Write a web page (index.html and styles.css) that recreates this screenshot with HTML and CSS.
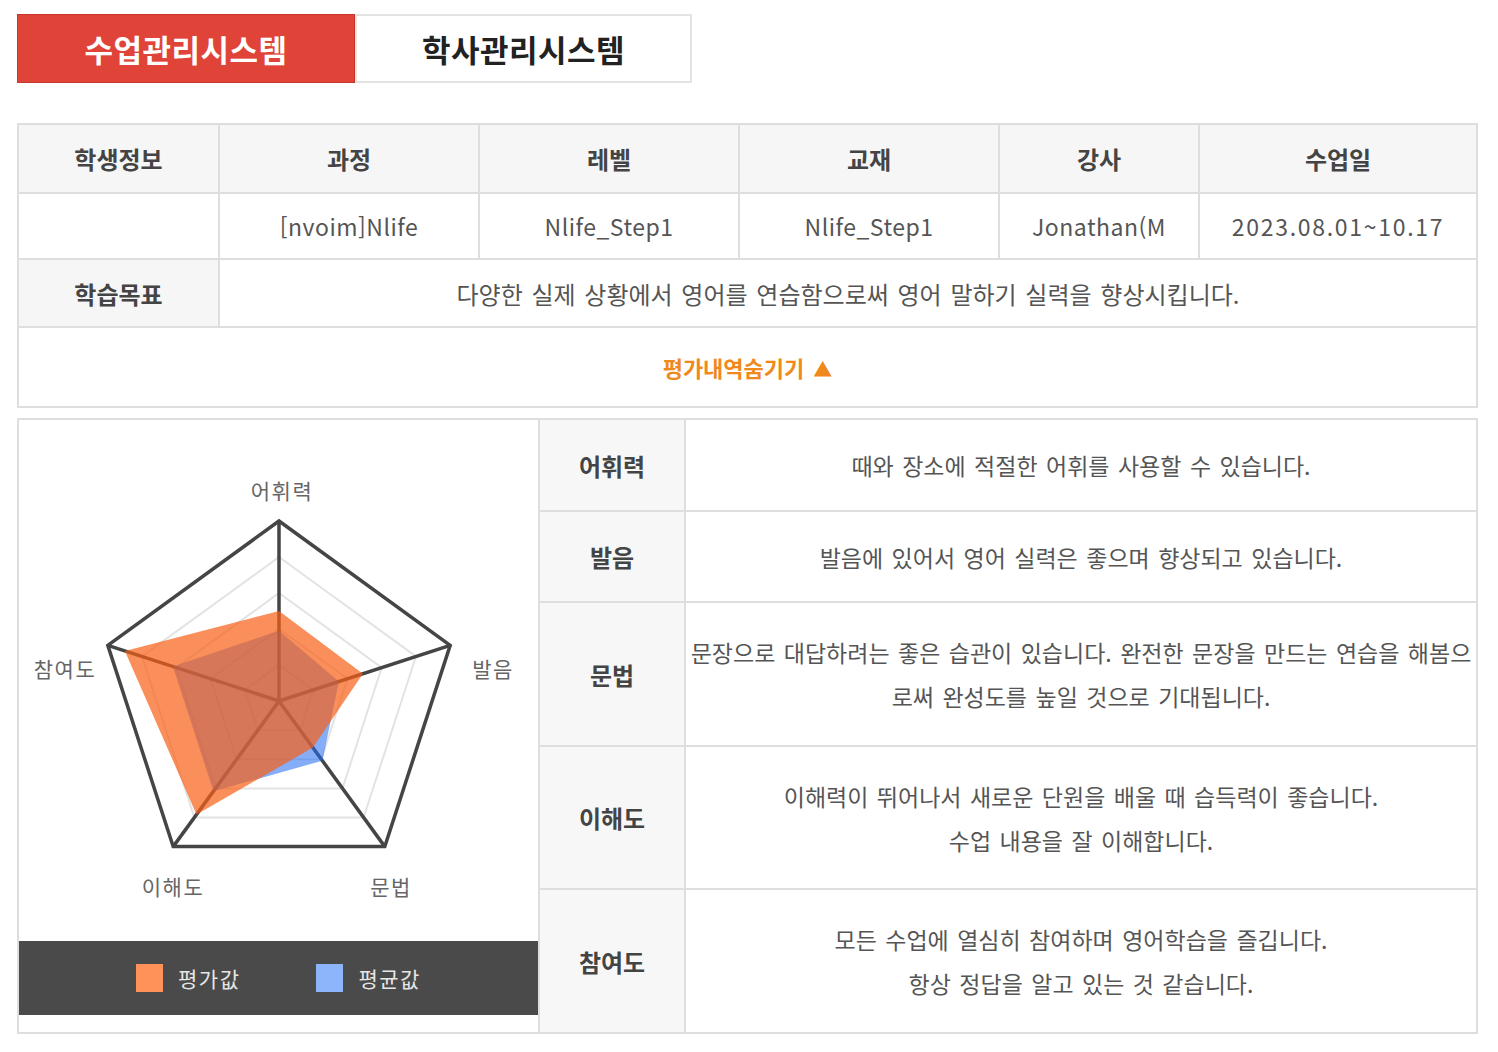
FILE: index.html
```html
<!DOCTYPE html>
<html lang="ko">
<head>
<meta charset="utf-8">
<title>수업관리시스템</title>
<link rel="stylesheet" href="styles.css">
</head>
<body>
<div class="page">
  <div class="tabs">
    <div class="tab tab-on">수업관리시스템</div>
    <div class="tab tab-off">학사관리시스템</div>
  </div>

  <table class="info">
    <colgroup>
      <col class="w201"><col class="w260"><col class="w260"><col class="w260"><col class="w200"><col class="w278">
    </colgroup>
    <tr class="r-head">
      <th>학생정보</th><th>과정</th><th>레벨</th><th>교재</th><th>강사</th><th>수업일</th>
    </tr>
    <tr class="r-data">
      <td></td><td>[nvoim]Nlife</td><td>Nlife_Step1</td><td>Nlife_Step1</td><td>Jonathan(M</td><td class="date">2023.08.01~10.17</td>
    </tr>
    <tr class="r-goal">
      <th>학습목표</th>
      <td colspan="5" class="goal">다양한 실제 상황에서 영어를 연습함으로써 영어 말하기 실력을 향상시킵니다.</td>
    </tr>
    <tr class="r-toggle">
      <td colspan="6" class="toggle">평가내역숨기기<span class="tri">▲</span></td>
    </tr>
  </table>

  <table class="eval">
    <colgroup><col class="w521"><col class="w146"><col class="w792"></colgroup>
    <tr class="r1">
      <td rowspan="5" class="chart-cell">
        <svg class="radar" viewBox="19 421 518 521" width="518" height="521">
          <g fill="none" stroke="#e3e3e3" stroke-width="2">
            <polygon points="279,666 313.2,690.9 300.2,731.1 257.8,731.1 244.8,690.9"/>
            <polygon points="279,630 347.5,679.8 321.3,760.2 236.7,760.2 210.5,679.8"/>
            <polygon points="279,594 381.7,668.6 342.5,789.4 215.5,789.4 176.3,668.6"/>
            <polygon points="279,558 416,657.5 363.6,818.5 194.4,818.5 142,657.5"/>
          </g>
          <g stroke="#454545" stroke-width="3.5" fill="none">
            <line x1="279" y1="702" x2="279" y2="522"/>
            <line x1="279" y1="702" x2="450.2" y2="646.4"/>
            <line x1="279" y1="702" x2="384.8" y2="847.6"/>
            <line x1="279" y1="702" x2="173.2" y2="847.6"/>
            <line x1="279" y1="702" x2="107.8" y2="646.4"/>
            <polygon points="279,522 450.2,646.4 384.8,847.6 173.2,847.6 107.8,646.4"/>
          </g>
          <polygon class="avg" points="279,631.8 338.9,682.5 322.4,761.7 213.4,792.3 172.9,667.5"/>
          <polygon class="score" points="279,612 362.9,674.7 312.9,748.6 196.5,815.6 124.9,651.9"/>
          <text class="lbl" x="282" y="500">어휘력</text>
          <text class="lbl" x="493" y="678">발음</text>
          <text class="lbl" x="65" y="678">참여도</text>
          <text class="lbl" x="173" y="896">이해도</text>
          <text class="lbl" x="391" y="896">문법</text>
        </svg>
        <div class="legend">
          <span class="sw sw-score"></span><span class="lg-txt">평가값</span>
          <span class="sw sw-avg"></span><span class="lg-txt">평균값</span>
        </div>
      </td>
      <th>어휘력</th>
      <td class="desc">때와 장소에 적절한 어휘를 사용할 수 있습니다.</td>
    </tr>
    <tr class="r2">
      <th>발음</th>
      <td class="desc">발음에 있어서 영어 실력은 좋으며 향상되고 있습니다.</td>
    </tr>
    <tr class="r3">
      <th>문법</th>
      <td class="desc">문장으로 대답하려는 좋은 습관이 있습니다. 완전한 문장을 만드는 연습을 해봄으로써 완성도를 높일 것으로 기대됩니다.</td>
    </tr>
    <tr class="r4">
      <th>이해도</th>
      <td class="desc">이해력이 뛰어나서 새로운 단원을 배울 때 습득력이 좋습니다.<br>수업 내용을 잘 이해합니다.</td>
    </tr>
    <tr class="r5">
      <th>참여도</th>
      <td class="desc">모든 수업에 열심히 참여하며 영어학습을 즐깁니다.<br>항상 정답을 알고 있는 것 같습니다.</td>
    </tr>
  </table>
</div>
</body>
</html>
```

FILE: styles.css
```css
body {
  margin: 0;
  background: #ffffff;
  font-family: "Noto Sans CJK KR", "Noto Sans", sans-serif;
  color: #555555;
}

.page {
  padding: 14px 0 0 17px;
  width: 1459px;
}

/* tabs */
.tabs {
  display: flex;
  height: 69px;
}
.tab {
  box-sizing: border-box;
  display: flex;
  align-items: center;
  justify-content: center;
  height: 69px;
  font-size: 31px;
  font-weight: 700;
  letter-spacing: 0.5px;
}
.tab-on {
  width: 338px;
  background: #e04337;
  border: 1px solid #c7362c;
  color: #ffffff;
}
.tab-off {
  width: 337px;
  background: #ffffff;
  border: 2px solid #e3e3e3;
  color: #222222;
}

/* tables */
table {
  border-collapse: collapse;
  table-layout: fixed;
  width: 1459px;
}
th, td {
  border: 2px solid #dedede;
  padding: 0;
  text-align: center;
  vertical-align: middle;
}
th {
  background: #f6f6f6;
  color: #444444;
  font-size: 24px;
  font-weight: 700;
}

.w201 { width: 201px; }
.w260 { width: 260px; }
.w200 { width: 200px; }
.w278 { width: 278px; }
.w521 { width: 521px; }
.w146 { width: 146px; }
.w792 { width: 792px; }

.info {
  margin-top: 40px;
}
.r-head { height: 69px; }
.r-data { height: 66px; }
.r-goal { height: 68px; }
.r-toggle { height: 80px; }

.r-data td {
  font-size: 23px;
  letter-spacing: 0.5px;
  color: #555555;
}
.r-data td.date {
  letter-spacing: 1.7px;
}
.goal {
  font-size: 24px;
  word-spacing: 2px;
  color: #555555;
}
.toggle {
  font-size: 22px;
  font-weight: 700;
  color: #f0891b;
}
.tri {
  margin-left: 9px;
  font-size: 19px;
}

.eval {
  margin-top: 10px;
}
.r1 { height: 92px; }
.r2 { height: 91px; }
.r3 { height: 144px; }
.r4 { height: 143px; }
.r5 { height: 144px; }

.chart-cell {
  vertical-align: top;
  background: #ffffff;
}
.radar {
  display: block;
}
.avg {
  fill: rgb(35, 105, 240);
  fill-opacity: 0.55;
}
.score {
  fill: rgb(248, 95, 22);
  fill-opacity: 0.7;
}
.lbl {
  font-family: "Noto Sans CJK KR", sans-serif;
  font-size: 21px;
  fill: #666666;
  letter-spacing: 1.5px;
  text-anchor: middle;
}

.legend {
  height: 74px;
  background: #4a4a4a;
  display: flex;
  align-items: center;
  padding-left: 117px;
}
.sw {
  width: 27px;
  height: 28px;
  margin-right: 15px;
}
.sw-score { background: #ff9258; }
.sw-avg {
  background: #8cb5fb;
  margin-left: 76px;
}
.lg-txt {
  font-size: 21px;
  color: #e6e6e6;
  letter-spacing: 1.5px;
}

.eval th {
  background: #f7f7f7;
}
.desc {
  font-size: 23px;
  line-height: 44px;
  word-spacing: 2px;
  word-break: break-all;
  padding: 0 2px;
  color: #555555;
}
```
